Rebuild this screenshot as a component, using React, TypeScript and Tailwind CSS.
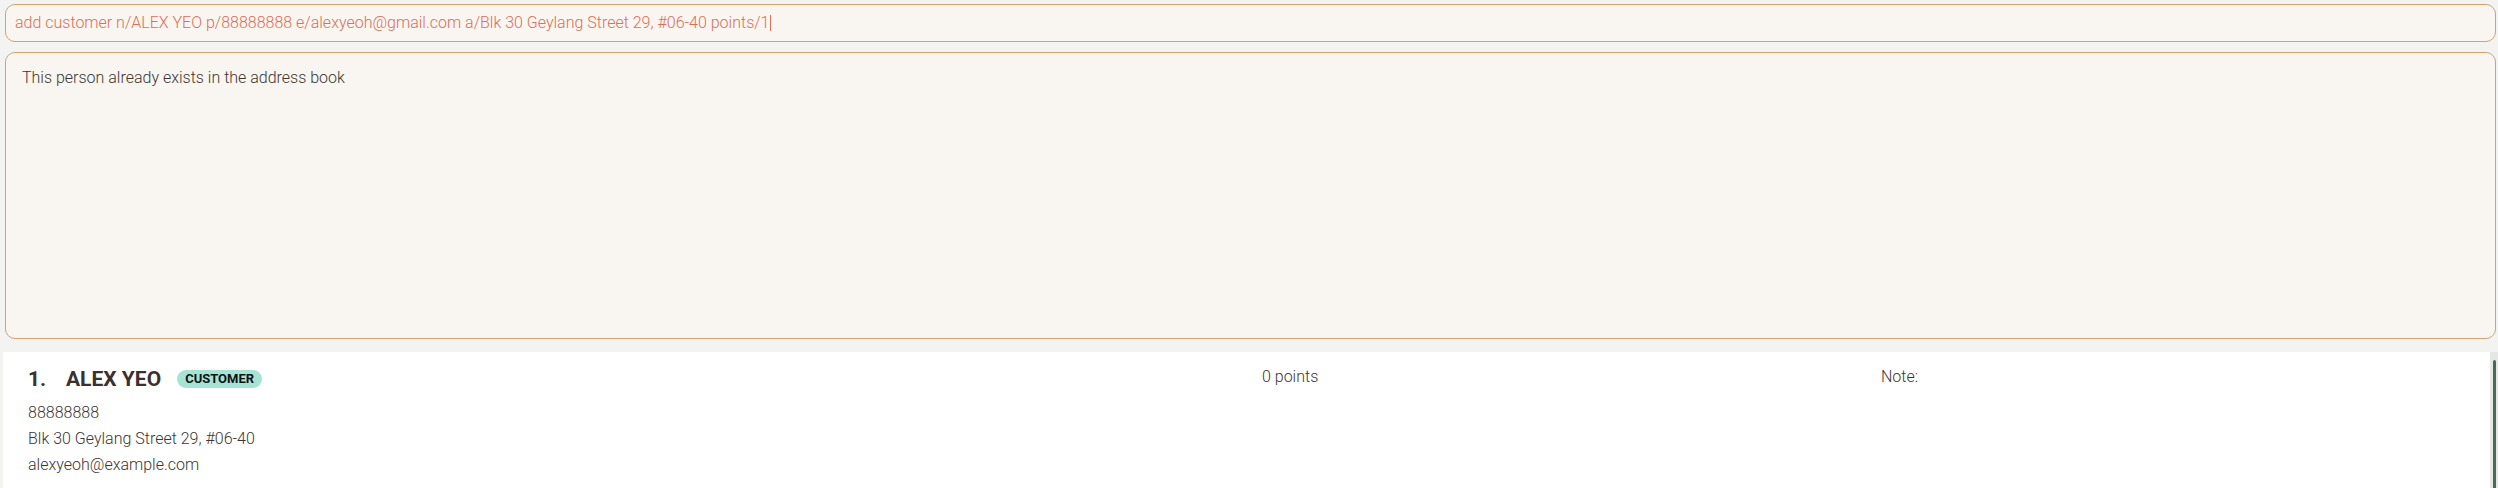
import React from 'react';

const commandText =
  'add customer n/ALEX YEO p/88888888 e/alexyeoh@gmail.com a/Blk 30 Geylang Street 29, #06-40 points/1';

interface Person {
  index: number;
  name: string;
  tag: string;
  phone: string;
  address: string;
  email: string;
  points: number;
  note: string;
}

const people: Person[] = [
  {
    index: 1,
    name: 'ALEX YEO',
    tag: 'CUSTOMER',
    phone: '88888888',
    address: 'Blk 30 Geylang Street 29, #06-40',
    email: 'alexyeoh@example.com',
    points: 0,
    note: ''
  }
];

const PersonCard: React.FC<{ person: Person }> = ({ person }) => (
  <div className="grid grid-cols-[1234px_619px_1fr] pl-[25px] pt-[13px] pb-[10px]">
    <div>
      <div className="flex items-center leading-[28px]">
        <span className="w-[38px] text-[21px] font-bold text-[#3b3030]">{person.index}.</span>
        <span className="text-[21px] font-bold text-[#3b3030]">{person.name}</span>
        <span className="ml-[16px] h-[18px] px-[8px] flex items-center rounded-[9px] bg-[#a5e4d5] text-[13px] font-bold text-[#111]">
          {person.tag}
        </span>
      </div>
      <div className="mt-[7px] text-[16px] leading-[26px] text-[#3d3535] font-light">
        <div>{person.phone}</div>
        <div>{person.address}</div>
        <div>{person.email}</div>
      </div>
    </div>
    <div className="text-[16px] font-light leading-[24px] text-[#3d3535]">{person.points} points</div>
    <div className="text-[16px] font-light leading-[24px] text-[#3d3535]">Note:{person.note}</div>
  </div>
);

export default function App() {
  return (
    <div className="h-[488px] overflow-hidden bg-[#f3f3f2] font-['Roboto',sans-serif]">
      {/* command box */}
      <div className="pl-[5px] pr-[2px] pt-[4px]">
        <div className="h-[38px] flex items-center pl-[9px] rounded-[10px] border border-[#d6a26c] bg-[#f9f6f1]">
          <span className="text-[16px] font-light text-[#df6d58]">{commandText}</span>
          <span className="ml-[1px] w-[1px] h-[16px] bg-[#df6d58]" />
        </div>
      </div>

      {/* result box */}
      <div className="pl-[5px] pr-[2px] pt-[10px]">
        <div className="h-[287px] pl-[16px] pt-[13px] rounded-[10px] border border-[#d6a26c] bg-[#f9f6f1]">
          <p className="text-[16px] leading-[24px] font-light text-[#3d3535]">
            This person already exists in the address book
          </p>
        </div>
      </div>

      {/* person list */}
      <div className="flex pl-[3px] pt-[13px] h-[200px]">
        <div className="flex-1 bg-white">
          {people.map(p => (
            <PersonCard key={p.index} person={p} />
          ))}
        </div>
        <div className="w-[8px] bg-[#e6e6e6] flex justify-center pt-[8px]">
          <div className="w-[3px] h-full rounded-t-[2px] bg-[#476b55]" />
        </div>
      </div>
    </div>
  );
}
